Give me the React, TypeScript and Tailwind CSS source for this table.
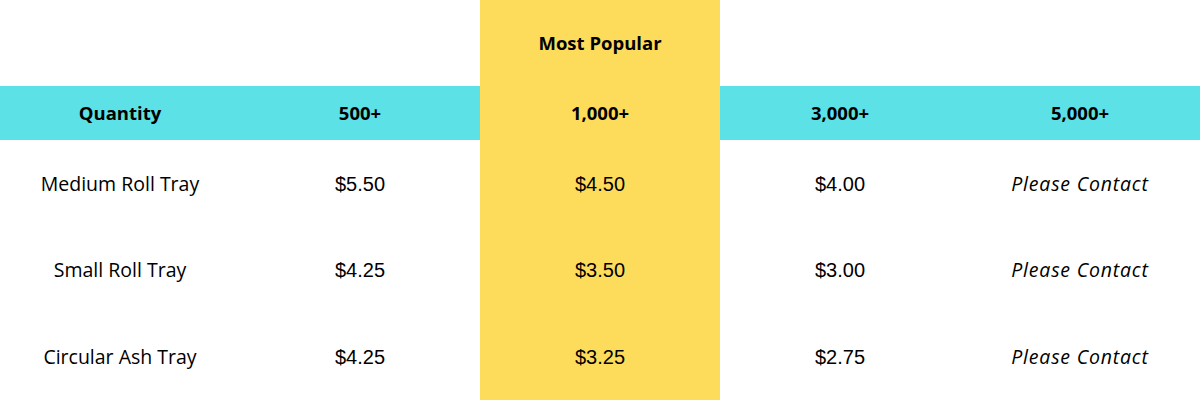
const headers = ['Quantity', '500+', '1,000+', '3,000+', '5,000+'];

const rows = [
  { name: 'Medium Roll Tray', prices: ['$5.50', '$4.50', '$4.00'], h: 'h-[87px]' },
  { name: 'Small Roll Tray', prices: ['$4.25', '$3.50', '$3.00'], h: 'h-[86px]' },
  { name: 'Circular Ash Tray', prices: ['$4.25', '$3.25', '$2.75'], h: 'h-[87px]' },
];

const label = "font-['Open_Sans',sans-serif]";
const price = "font-['Liberation_Sans',Arial,sans-serif]";

export default function App() {
  return (
    <div className="w-[1200px] h-[400px] bg-white text-black overflow-hidden">
      <div className="grid grid-cols-5 h-[86px]">
        <div className="col-start-3 bg-[#fddc5c] flex items-center justify-center">
          <p className={`${label} text-[18.5px] font-bold`}>Most Popular</p>
        </div>
      </div>
      <div className="grid grid-cols-5 h-[54px] bg-[#5ce1e6]">
        {headers.map((h, i) => (
          <div
            key={h}
            className={`flex items-center justify-center ${i === 2 ? 'bg-[#fddc5c]' : ''}`}
          >
            <p className={`${label} text-[18.5px] font-bold`}>{h}</p>
          </div>
        ))}
      </div>
      {rows.map((row) => (
        <div key={row.name} className={`grid grid-cols-5 ${row.h}`}>
          <div className="flex items-center justify-center">
            <p className={`${label} text-[19.5px]`}>{row.name}</p>
          </div>
          {row.prices.map((p, i) => (
            <div
              key={i}
              className={`flex items-center justify-center ${i === 1 ? 'bg-[#fddc5c]' : ''}`}
            >
              <p className={`${price} text-[20px]`}>{p}</p>
            </div>
          ))}
          <div className="flex items-center justify-center">
            <p className={`${label} text-[19.5px] italic tracking-[0.8px]`}>Please Contact</p>
          </div>
        </div>
      ))}
    </div>
  );
}
